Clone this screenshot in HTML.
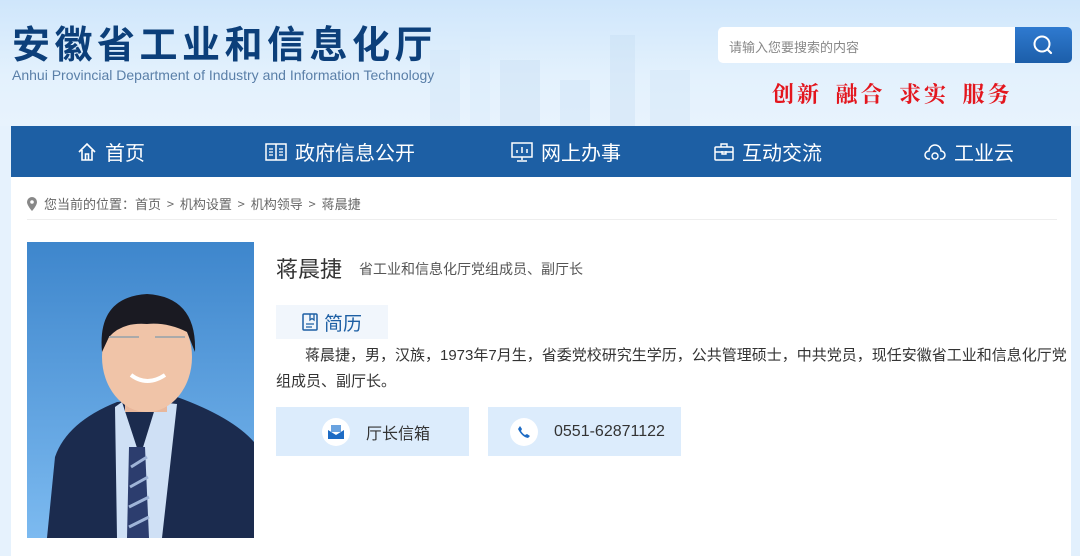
<!DOCTYPE html>
<html><head><meta charset="utf-8"><style>
*{margin:0;padding:0;box-sizing:border-box}
body{width:1080px;height:556px;overflow:hidden;font-family:"Liberation Sans","Noto Sans CJK SC",sans-serif;background:linear-gradient(90deg,#e6f2fd,#e2f0fd);position:relative}
.hdr{position:absolute;left:0;top:0;width:1080px;height:126px;background:linear-gradient(180deg,#cfe6fb 0%,#e3f1fd 60%,#e8f3fd 100%)}
.title{position:absolute;left:12px;top:19px;font-size:38px;font-weight:bold;color:#0c3f7a;letter-spacing:4.5px;font-family:"Noto Sans CJK SC",sans-serif;line-height:46px}
.en{position:absolute;left:12px;top:67px;font-size:14px;color:#5a7fa8}
.search{position:absolute;left:718px;top:27px;width:298px;height:36px;background:#fff;border-radius:5px 0 0 5px;font-size:13px;color:#888;padding:10px 11px;font-family:"Noto Sans CJK SC",sans-serif}
.sbtn{position:absolute;left:1015px;top:27px;width:57px;height:36px;background:linear-gradient(#2f7ad0,#1c5ea9);border-radius:0 5px 5px 0}
.slogan{position:absolute;left:772px;top:78px;font-size:22px;color:#e3161e;font-weight:bold;font-family:"Noto Serif CJK SC",serif;letter-spacing:3px;word-spacing:5px}
.nav{position:absolute;left:11px;top:126px;width:1060px;height:51px;background:#1d5fa4}
.ni{position:absolute;top:0;height:51px;line-height:51px;color:#fff;font-size:20px;font-family:"Noto Sans CJK SC",sans-serif;display:flex;align-items:center;gap:8px}
.main{position:absolute;left:11px;top:177px;width:1060px;height:379px;background:#fff}
.bc{position:absolute;left:26px;top:194px;font-size:13px;color:#666;font-family:"Noto Sans CJK SC",sans-serif}
.line{position:absolute;left:27px;top:219px;width:1030px;height:1px;background:#eee}
.name{position:absolute;left:276px;top:252px;font-size:22px;color:#333;font-family:"Noto Sans CJK SC",sans-serif}
.pos{position:absolute;left:359px;top:259px;font-size:14px;color:#555;font-family:"Noto Sans CJK SC",sans-serif}
.jl{position:absolute;left:276px;top:305px;width:112px;height:34px;background:#f1f6fc;color:#1d5fa4;font-size:19px;font-family:"Noto Sans CJK SC",sans-serif;display:flex;align-items:center;justify-content:center;gap:6px}
.bio{position:absolute;left:276px;top:343px;width:800px;font-size:15px;line-height:26px;color:#333;text-indent:29px;font-family:"Liberation Sans","Noto Sans CJK SC",sans-serif}
.card{position:absolute;top:407px;height:49px;background:#dcecfc;display:flex;align-items:center;font-size:16px;color:#333;font-family:"Liberation Sans","Noto Sans CJK SC",sans-serif}
.circ{width:28px;height:28px;border-radius:50%;background:#fff;display:flex;align-items:center;justify-content:center;margin-right:16px}
</style></head><body>
<div class="hdr">
<svg width="1080" height="126" style="position:absolute;left:0;top:0" opacity=".35">
<rect x="430" y="50" width="30" height="76" fill="#cde3f7"/><rect x="470" y="20" width="20" height="106" fill="#d6eafb"/><rect x="500" y="60" width="40" height="66" fill="#c4dcf3"/><rect x="560" y="80" width="30" height="46" fill="#c9e0f5"/><rect x="610" y="35" width="25" height="91" fill="#c4dcf3"/><rect x="650" y="70" width="40" height="56" fill="#cfe4f7"/>
</svg>
</div>
<div class="title">安徽省工业和信息化厅</div>
<div class="en">Anhui Provincial Department of Industry and Information Technology</div>
<div class="search">请输入您要搜索的内容</div>
<div class="sbtn"><svg width="57" height="36"><circle cx="27" cy="17" r="7.5" fill="none" stroke="#fff" stroke-width="2"/><line x1="32.5" y1="22.5" x2="36" y2="26" stroke="#fff" stroke-width="2.2" stroke-linecap="round"/></svg></div>
<div class="slogan">创新 融合 求实 服务</div>
<div class="nav">
<div class="ni" style="left:66px"><svg width="20" height="20" viewBox="0 0 20 20"><path d="M2 10 L10 2 L18 10 M5 8 V18 H15 V8 M8.5 18 V12 H11.5 V18" fill="none" stroke="#fff" stroke-width="1.6"/></svg>首页</div>
<div class="ni" style="left:254px"><svg width="22" height="20" viewBox="0 0 22 20"><rect x="1" y="2" width="20" height="16" fill="none" stroke="#fff" stroke-width="1.5"/><line x1="11" y1="2" x2="11" y2="18" stroke="#fff" stroke-width="1.5"/><path d="M4 7h4M4 10h4M4 13h4M14 7h4M14 10h4M14 13h4" stroke="#fff" stroke-width="1.3"/></svg>政府信息公开</div>
<div class="ni" style="left:500px"><svg width="22" height="20" viewBox="0 0 22 20"><rect x="1" y="1" width="20" height="14" fill="none" stroke="#fff" stroke-width="1.5"/><path d="M11 15v3M6 19h10M6 11v-3M11 11v-6M16 11v-4" stroke="#fff" stroke-width="1.5"/></svg>网上办事</div>
<div class="ni" style="left:703px"><svg width="20" height="20" viewBox="0 0 20 20"><rect x="1" y="5" width="18" height="13" rx="1" fill="none" stroke="#fff" stroke-width="1.5"/><path d="M7 5V2h6v3M1 10h18M8 9v3h4V9" fill="none" stroke="#fff" stroke-width="1.4"/></svg>互动交流</div>
<div class="ni" style="left:913px"><svg width="22" height="20" viewBox="0 0 22 20"><path d="M6 17H5a4 4 0 0 1 0-8 6 6 0 0 1 12 0 4 4 0 0 1 0 8h-1" fill="none" stroke="#fff" stroke-width="1.5"/><circle cx="11" cy="14" r="3" fill="none" stroke="#fff" stroke-width="1.4"/></svg>工业云</div>
</div>
<div class="main"></div>
<div class="bc"><svg width="12" height="14" viewBox="0 0 12 14" style="vertical-align:-2px;margin-right:6px"><path d="M6 0a5 5 0 0 1 5 5c0 3.5-5 9-5 9S1 8.5 1 5a5 5 0 0 1 5-5z" fill="#888"/><circle cx="6" cy="5" r="1.8" fill="#fff"/></svg>您当前的位置：首页 &nbsp;&gt;&nbsp; 机构设置 &nbsp;&gt;&nbsp; 机构领导 &nbsp;&gt;&nbsp; 蒋晨捷</div>
<div class="line"></div>
<svg style="position:absolute;left:27px;top:242px" width="227" height="296" viewBox="0 0 227 296">
<defs><linearGradient id="bg" x1="0" y1="0" x2="0" y2="1"><stop offset="0" stop-color="#3e86cc"/><stop offset="1" stop-color="#7cbaf0"/></linearGradient></defs>
<rect width="227" height="296" fill="url(#bg)"/>
<path d="M20 296 L28 215 Q40 180 90 160 L150 155 Q205 175 227 200 L227 296Z" fill="#1b2b4e"/>
<path d="M95 160 L113 215 L130 160 L150 162 L135 296 L90 296 L88 165Z" fill="#cfe0f5"/>
<path d="M102 205 L118 205 L122 296 L100 296Z" fill="#2c3d6e"/>
<path d="M104 225 L120 215 M103 245 L121 235 M102 265 L122 255 M102 285 L122 275" stroke="#9fb4d8" stroke-width="3"/>
<rect x="98" y="130" width="42" height="40" fill="#e8b79c"/>
<ellipse cx="120" cy="115" rx="45" ry="55" fill="#f0c4a8"/>
<path d="M75 110 Q70 55 120 52 Q170 55 168 110 L160 90 Q140 80 120 82 Q95 80 82 95Z" fill="#1a1a22"/>
<path d="M82 95 h30 M128 95 h30" stroke="#aaa" stroke-width="2"/>
<path d="M104 133 Q120 145 138 133" stroke="#fff" stroke-width="4" fill="none"/>
</svg>
<div class="name">蒋晨捷</div>
<div class="pos">省工业和信息化厅党组成员、副厅长</div>
<div class="jl"><svg width="16" height="18" viewBox="0 0 16 18"><rect x="1" y="1" width="14" height="16" rx="1" fill="none" stroke="#1d5fa4" stroke-width="1.5"/><path d="M8 1v6l2-1.5 2 1.5V1M4 11h8M4 14h6" fill="none" stroke="#1d5fa4" stroke-width="1.3"/></svg>简历</div>
<div class="bio">蒋晨捷，男，汉族，1973年7月生，省委党校研究生学历，公共管理硕士，中共党员，现任安徽省工业和信息化厅党组成员、副厅长。</div>
<div class="card" style="left:276px;width:193px;padding-left:46px"><div class="circ"><svg width="16" height="14" viewBox="0 0 16 14"><rect x="3" y="0" width="10" height="7" fill="#6aa3e0"/><path d="M0 5 L8 10 L16 5 V14 H0Z" fill="#1d6bc4"/></svg></div>厅长信箱</div>
<div class="card" style="left:488px;width:193px;padding-left:22px"><div class="circ"><svg width="14" height="14" viewBox="0 0 14 14"><path d="M3 1 L5 4 L4 6 Q6 9 8 10 L10 9 L13 11 L11 13 Q5 12 1 4Z" fill="#1d6bc4"/></svg></div>0551-62871122</div>
</body></html>
